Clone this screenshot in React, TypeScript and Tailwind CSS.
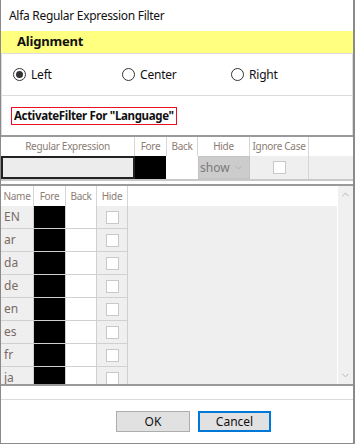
import { ChevronDown, ChevronUp } from 'lucide-react';

const langs = ['EN', 'ar', 'da', 'de', 'en', 'es', 'fr', 'ja'];

function Radio({ label, checked }: { label: string; checked?: boolean }) {
  return (
    <label className="flex items-center gap-[5px]">
      <span className="flex h-[13px] w-[13px] items-center justify-center rounded-full border border-[#333] bg-white">
        {checked ? <span className="h-[7px] w-[7px] rounded-full bg-[#333]" /> : null}
      </span>
      <span className="text-[12px] tracking-[-0.2px] text-[#111]">{label}</span>
    </label>
  );
}

function Check() {
  return <span className="block h-[13px] w-[13px] border border-[#c8c8c8] bg-white" />;
}

export default function App() {
  return (
    <div className="flex h-[444px] w-[355px] flex-col border-b border-l border-r-2 border-[#8a8a8a] bg-white font-['Noto_Sans',sans-serif] text-[#111]">
      <div className="flex h-[31px] shrink-0 items-center px-[8px] text-[12px] tracking-[-0.3px]">Alfa Regular Expression Filter</div>

      <div className="flex h-[22px] shrink-0 items-center bg-[#ffff80] px-[16px] text-[13px] font-bold tracking-[-0.2px]">Alignment</div>

      <div className="flex h-[43px] shrink-0 items-center border border-[#dcdcdc] pl-[11px]">
        <div className="w-[109px]">
          <Radio label="Left" checked />
        </div>
        <div className="w-[109px]">
          <Radio label="Center" />
        </div>
        <Radio label="Right" />
      </div>

      <div className="flex h-[39px] shrink-0 items-center border-x border-[#dcdcdc] pl-[9px]">
        <span className="whitespace-nowrap border border-[#e81123] px-[2px] text-[11.5px] leading-[16px] font-bold tracking-[-0.35px]">
          ActivateFilter For "Language"
        </span>
      </div>

      <div className="shrink-0 border-t-2 border-[#9a9a9a]">
        <div className="flex h-[19px] whitespace-nowrap text-[10px] tracking-[-0.3px] text-[#8b7d74]">
          <div className="flex w-[134px] items-center justify-center border-r border-[#d6d6d6]">Regular Expression</div>
          <div className="flex w-[32px] items-center justify-center border-r border-[#d6d6d6]">Fore</div>
          <div className="flex w-[31px] items-center justify-center border-r border-[#d6d6d6]">Back</div>
          <div className="flex w-[52px] items-center justify-center border-r border-[#d6d6d6]">Hide</div>
          <div className="flex w-[59px] items-center justify-center border-r border-[#d6d6d6]">Ignore Case</div>
          <div className="flex-1" />
        </div>
        <div className="flex h-[25px] border-b-2 border-[#c8c8c8] bg-[#efefef]">
          <div className="w-[134px] border-2 border-[#222] bg-[#ececec]" />
          <div className="w-[31px] bg-black" />
          <div className="w-[32px] bg-white" />
          <div className="flex w-[52px] items-center justify-between border border-[#c4c4c4] bg-[#cccccc] pl-[1px] pr-[5px] text-[12px] text-[#7a7a7a]">
            show
            <ChevronDown size={11} strokeWidth={1.2} className="text-[#9a9a9a]" />
          </div>
          <div className="flex w-[59px] items-center justify-center border-r border-[#d6d6d6]">
            <Check />
          </div>
        </div>
      </div>

      <div className="h-[3px] shrink-0" />

      <div className="flex h-[202px] shrink-0 overflow-hidden border-y-2 border-[#9a9a9a]">
        <div className="flex-1 bg-[#efefef]">
          <div className="flex h-[20px] whitespace-nowrap bg-white text-[10px] tracking-[-0.3px] text-[#8b7d74]">
            <div className="flex w-[33px] items-center justify-center border-r border-[#d6d6d6]">Name</div>
            <div className="flex w-[32px] items-center justify-center border-r border-[#d6d6d6]">Fore</div>
            <div className="flex w-[31px] items-center justify-center border-r border-[#d6d6d6]">Back</div>
            <div className="flex w-[31px] items-center justify-center border-r border-[#d6d6d6]">Hide</div>
          </div>
          {langs.map((l) => (
            <div key={l} className="flex h-[23px] w-[127px]">
              <div className="flex w-[33px] items-center border-r border-b border-[#d0d0d0] pl-[3px] text-[12px] text-[#7a6a66]">{l}</div>
              <div className="w-[32px] border-r border-b border-[#d0d0d0] bg-black" />
              <div className="w-[31px] border-r border-b border-[#d0d0d0] bg-white" />
              <div className="flex w-[31px] items-center justify-center border-r border-b border-[#d0d0d0]">
                <Check />
              </div>
            </div>
          ))}
        </div>
        <div className="flex w-[16px] flex-col items-center justify-between border-l border-white bg-[#f0f0f0] py-[3px] text-[#b0b0b0]">
          <ChevronUp size={11} strokeWidth={2} />
          <ChevronDown size={11} strokeWidth={2} />
        </div>
      </div>

      <div className="h-[14px] shrink-0 border-b border-[#dcdcdc]" />

      <div className="flex flex-1 items-center gap-[8px] pl-[115px]">
        <button className="h-[21px] w-[74px] border border-[#adadad] bg-[#e1e1e1] text-[12px] text-[#111]">OK</button>
        <button className="h-[21px] w-[73px] border-2 border-solid border-[#0078d7] bg-[#e1e1e1] text-[12px] text-[#111]">Cancel</button>
      </div>
    </div>
  );
}
